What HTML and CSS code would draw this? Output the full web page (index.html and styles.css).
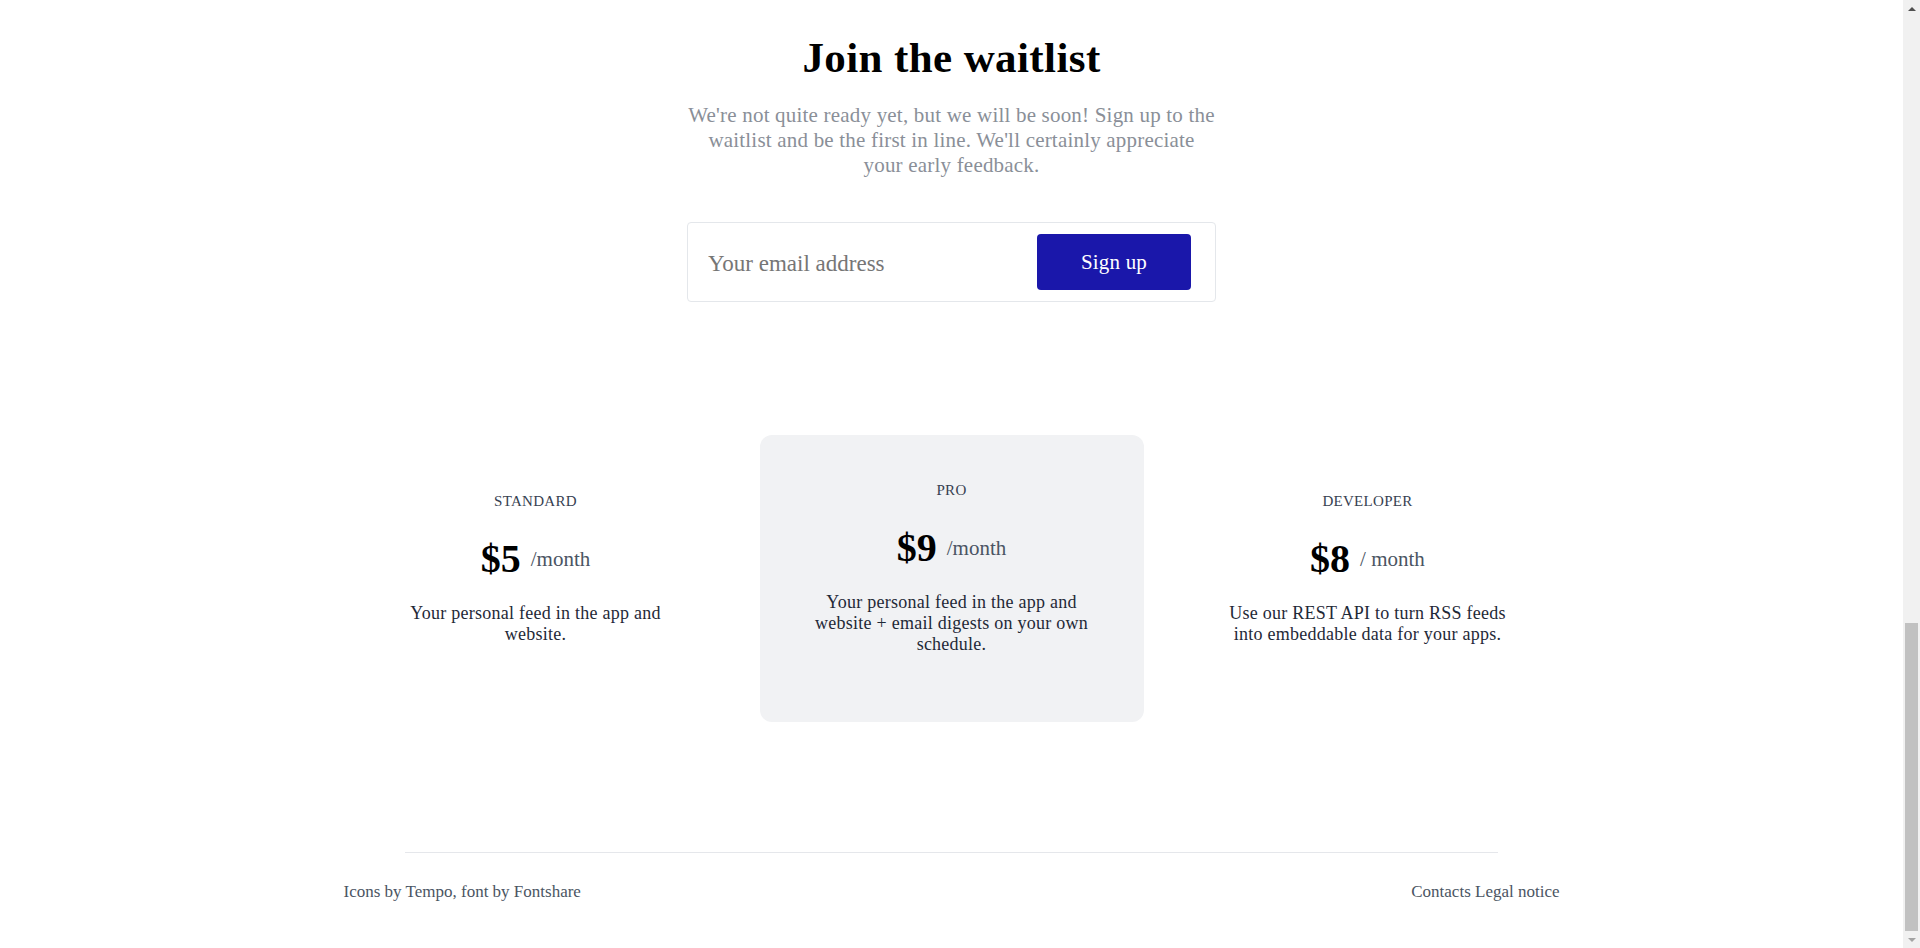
FILE: index.html
```html
<!DOCTYPE html>
<html lang="en">
<head>
<meta charset="utf-8">
<title>Join the waitlist</title>
<link rel="stylesheet" href="styles.css">
</head>
<body>
<div class="window">
  <div class="page">
    <section class="waitlist">
      <h1 class="title">Join the waitlist</h1>
      <p class="lead">We're not quite ready yet, but we will be soon! Sign up to the waitlist and be the first in line. We'll certainly appreciate<br> your early feedback.</p>
      <form class="signup" onsubmit="return false">
        <input class="signup-input" type="email" placeholder="Your email address">
        <button class="signup-button" type="submit">Sign up</button>
      </form>
    </section>

    <section class="pricing">
      <div class="plan">
        <div class="plan-name">Standard</div>
        <div class="price"><span class="amount">$5</span><span class="per">/month</span></div>
        <p class="desc">Your personal feed in the app and website.</p>
      </div>
      <div class="plan plan-featured">
        <div class="plan-name">Pro</div>
        <div class="price"><span class="amount">$9</span><span class="per">/month</span></div>
        <p class="desc">Your personal feed in the app and website + email digests on your own schedule.</p>
      </div>
      <div class="plan">
        <div class="plan-name">Developer</div>
        <div class="price"><span class="amount">$8</span><span class="per">/ month</span></div>
        <p class="desc">Use our REST API to turn RSS feeds into embeddable data for your apps.</p>
      </div>
    </section>

    <footer class="footer">
      <div class="footer-rule"></div>
      <div class="footer-row">
        <span class="credits">Icons by Tempo, font by Fontshare</span>
        <nav class="footer-links"><a href="#">Contacts</a> <a href="#">Legal notice</a></nav>
      </div>
    </footer>
  </div>

  <div class="scrollbar" aria-hidden="true">
    <div class="sb-arrow sb-up"></div>
    <div class="sb-track">
      <div class="sb-thumb"></div>
    </div>
    <div class="sb-arrow sb-down"></div>
  </div>
</div>
</body>
</html>
```

FILE: styles.css
```css
* { box-sizing: border-box; }

html, body {
  margin: 0;
  height: 100%;
  overflow: hidden;
  background: #ffffff;
}

body {
  font-family: "Liberation Serif", "Times New Roman", serif;
  color: #1f2937;
}

.window {
  display: flex;
  height: 948px;
}

.page {
  flex: 1;
  display: flex;
  flex-direction: column;
  align-items: center;
}

/* Waitlist */
.waitlist {
  padding-top: 32px;
  display: flex;
  flex-direction: column;
  align-items: center;
  text-align: center;
}

.title {
  margin: 0;
  font-size: 43px;
  line-height: 52px;
  font-weight: 700;
  letter-spacing: 0.4px;
  color: #000000;
}

.lead {
  margin: 19px 0 0;
  max-width: 540px;
  font-size: 21px;
  line-height: 25px;
  letter-spacing: 0.2px;
  color: #8a8f98;
}

.signup {
  margin-top: 44px;
  width: 529px;
  height: 80px;
  border: 1px solid #e4e7eb;
  border-radius: 4px;
  display: flex;
  align-items: center;
  padding: 11px 24px 11px 20px;
  gap: 12px;
}

.signup-input {
  flex: 1;
  min-width: 0;
  border: 0;
  outline: 0;
  background: transparent;
  font-family: inherit;
  font-size: 23px;
  color: #333;
  padding: 4px 0 0;
}

.signup-input::placeholder {
  color: #767676;
}

.signup-button {
  width: 154px;
  height: 56px;
  border: 0;
  border-radius: 4px;
  background: #1a17aa;
  color: #ffffff;
  font-family: inherit;
  font-size: 21px;
  letter-spacing: 0.2px;
  cursor: pointer;
}

/* Pricing */
.pricing {
  margin-top: 133px;
  width: 1216px;
  display: grid;
  grid-template-columns: repeat(3, 1fr);
  gap: 32px;
  align-items: center;
  text-align: center;
}

.plan {
  padding: 45px 24px 67px;
  border-radius: 12px;
}

.plan-featured {
  background: #f1f2f4;
}

.plan-name {
  font-size: 15px;
  line-height: 20px;
  letter-spacing: 0.3px;
  text-transform: uppercase;
  color: #374151;
}

.price {
  margin-top: 24px;
  display: flex;
  justify-content: center;
  align-items: center;
  gap: 10px;
}

.amount {
  font-size: 40px;
  line-height: 48px;
  font-weight: 700;
  color: #000000;
}

.per {
  font-size: 21px;
  line-height: 24px;
  color: #4b5563;
}

.desc {
  margin: 20px auto 0;
  max-width: 288px;
  font-size: 18px;
  line-height: 21px;
  letter-spacing: 0.25px;
  color: #1f2937;
}

/* Footer */
.footer {
  margin-top: 130px;
  width: 1216px;
  display: flex;
  flex-direction: column;
  align-items: center;
}

.footer-rule {
  width: 1093px;
  height: 1px;
  background: #e5e7eb;
}

.footer-row {
  margin-top: 27px;
  width: 100%;
  display: flex;
  justify-content: space-between;
  font-size: 17px;
  line-height: 24px;
  color: #4b5563;
}

.footer-links a {
  color: inherit;
  text-decoration: none;
}

/* Browser scrollbar (scrolled to bottom) */
.scrollbar {
  width: 17px;
  flex: none;
  background: #f1f1f1;
  display: flex;
  flex-direction: column;
}

.sb-arrow {
  height: 17px;
  display: flex;
  align-items: center;
  justify-content: center;
}

.sb-up::before {
  content: "";
  border-left: 4px solid transparent;
  border-right: 4px solid transparent;
  border-bottom: 4px solid #505050;
}

.sb-down::before {
  content: "";
  border-left: 4px solid transparent;
  border-right: 4px solid transparent;
  border-top: 4px solid #a3a3a3;
}

.sb-track {
  flex: 1;
  display: flex;
  flex-direction: column;
  justify-content: flex-end;
  padding: 0 2px;
}

.sb-thumb {
  height: 308px;
  background: #c1c1c1;
}
```
